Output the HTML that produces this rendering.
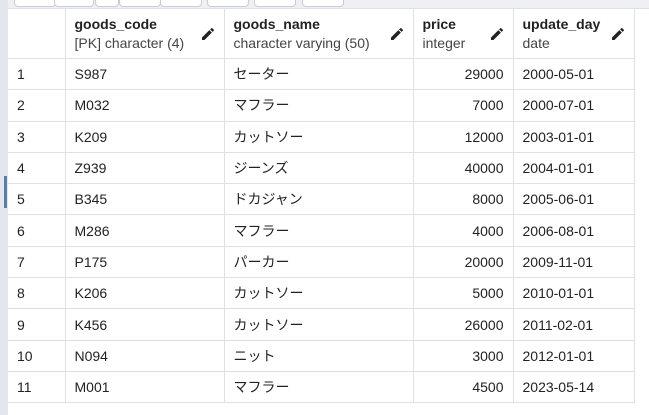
<!DOCTYPE html><html><head><style>
body{margin:0;width:649px;height:415px;background:#fff;font-family:"Liberation Sans","Noto Sans CJK JP",sans-serif;font-size:14px;color:#222;position:relative;overflow:hidden}
.top{position:absolute;left:0;top:0;width:649px;height:8px;background:#eef0f4;border-bottom:1px solid #dcdfe6}
.btn{position:absolute;top:-6px;height:11px;border:1px solid #c8ccd4;border-radius:4px;background:#fff}
.lb{position:absolute;left:0;top:0;width:8px;height:415px;background:#e3e6ec}
.mk{position:absolute;left:4px;top:176px;width:3px;height:32px;background:#5a7fa6}
table{position:absolute;left:8px;top:8px;border-collapse:collapse;table-layout:fixed}
td,th{border:1px solid #dde0e8;padding:0 9px;white-space:nowrap;overflow:hidden}
tr{height:31.3px}
tr.h{height:50px}
th{text-align:left;font-weight:normal;vertical-align:middle;position:relative}
th b{display:block;font-weight:bold;color:#222;line-height:19px}
th span{display:block;color:#444;line-height:19px}
th svg{position:absolute;right:8px;top:17px}
td.r{text-align:right}
td:first-child,th:first-child{border-left:none}
</style></head><body>
<div class="top"></div>
<div class="btn" style="left:14px;width:40px"></div>
<div class="btn" style="left:54px;width:38px"></div>
<div class="btn" style="left:95px;width:22px"></div>
<div class="btn" style="left:119px;width:40px"></div>
<div class="btn" style="left:160px;width:40px"></div>
<div class="btn" style="left:207px;width:40px"></div>
<div class="btn" style="left:254px;width:40px"></div>
<div class="btn" style="left:302px;width:40px"></div>
<div class="lb"></div><div class="mk"></div>
<table style="width:626px">
<colgroup><col style="width:57px"><col style="width:159px"><col style="width:189px"><col style="width:100px"><col style="width:121px"></colgroup>
<tr class="h"><th></th>
<th><b>goods_code</b><span>[PK] character (4)</span><svg width="16" height="16" viewBox="0 0 24 24"><path d="M3 17.25V21h3.75L17.8 9.94l-3.75-3.75L3 17.25zM20.7 7.04a1 1 0 000-1.41l-2.34-2.34a1 1 0 00-1.41 0l-1.83 1.83 3.75 3.75 1.83-1.83z" fill="#222"/></svg></th>
<th><b>goods_name</b><span>character varying (50)</span><svg width="16" height="16" viewBox="0 0 24 24"><path d="M3 17.25V21h3.75L17.8 9.94l-3.75-3.75L3 17.25zM20.7 7.04a1 1 0 000-1.41l-2.34-2.34a1 1 0 00-1.41 0l-1.83 1.83 3.75 3.75 1.83-1.83z" fill="#222"/></svg></th>
<th><b>price</b><span>integer</span><svg width="16" height="16" viewBox="0 0 24 24"><path d="M3 17.25V21h3.75L17.8 9.94l-3.75-3.75L3 17.25zM20.7 7.04a1 1 0 000-1.41l-2.34-2.34a1 1 0 00-1.41 0l-1.83 1.83 3.75 3.75 1.83-1.83z" fill="#222"/></svg></th>
<th><b>update_day</b><span>date</span><svg width="16" height="16" viewBox="0 0 24 24"><path d="M3 17.25V21h3.75L17.8 9.94l-3.75-3.75L3 17.25zM20.7 7.04a1 1 0 000-1.41l-2.34-2.34a1 1 0 00-1.41 0l-1.83 1.83 3.75 3.75 1.83-1.83z" fill="#222"/></svg></th></tr>
<tr><td>1</td><td>S987</td><td>セーター</td><td class="r">29000</td><td>2000-05-01</td></tr>
<tr><td>2</td><td>M032</td><td>マフラー</td><td class="r">7000</td><td>2000-07-01</td></tr>
<tr><td>3</td><td>K209</td><td>カットソー</td><td class="r">12000</td><td>2003-01-01</td></tr>
<tr><td>4</td><td>Z939</td><td>ジーンズ</td><td class="r">40000</td><td>2004-01-01</td></tr>
<tr><td>5</td><td>B345</td><td>ドカジャン</td><td class="r">8000</td><td>2005-06-01</td></tr>
<tr><td>6</td><td>M286</td><td>マフラー</td><td class="r">4000</td><td>2006-08-01</td></tr>
<tr><td>7</td><td>P175</td><td>パーカー</td><td class="r">20000</td><td>2009-11-01</td></tr>
<tr><td>8</td><td>K206</td><td>カットソー</td><td class="r">5000</td><td>2010-01-01</td></tr>
<tr><td>9</td><td>K456</td><td>カットソー</td><td class="r">26000</td><td>2011-02-01</td></tr>
<tr><td>10</td><td>N094</td><td>ニット</td><td class="r">3000</td><td>2012-01-01</td></tr>
<tr><td>11</td><td>M001</td><td>マフラー</td><td class="r">4500</td><td>2023-05-14</td></tr>
</table>
</body></html>
